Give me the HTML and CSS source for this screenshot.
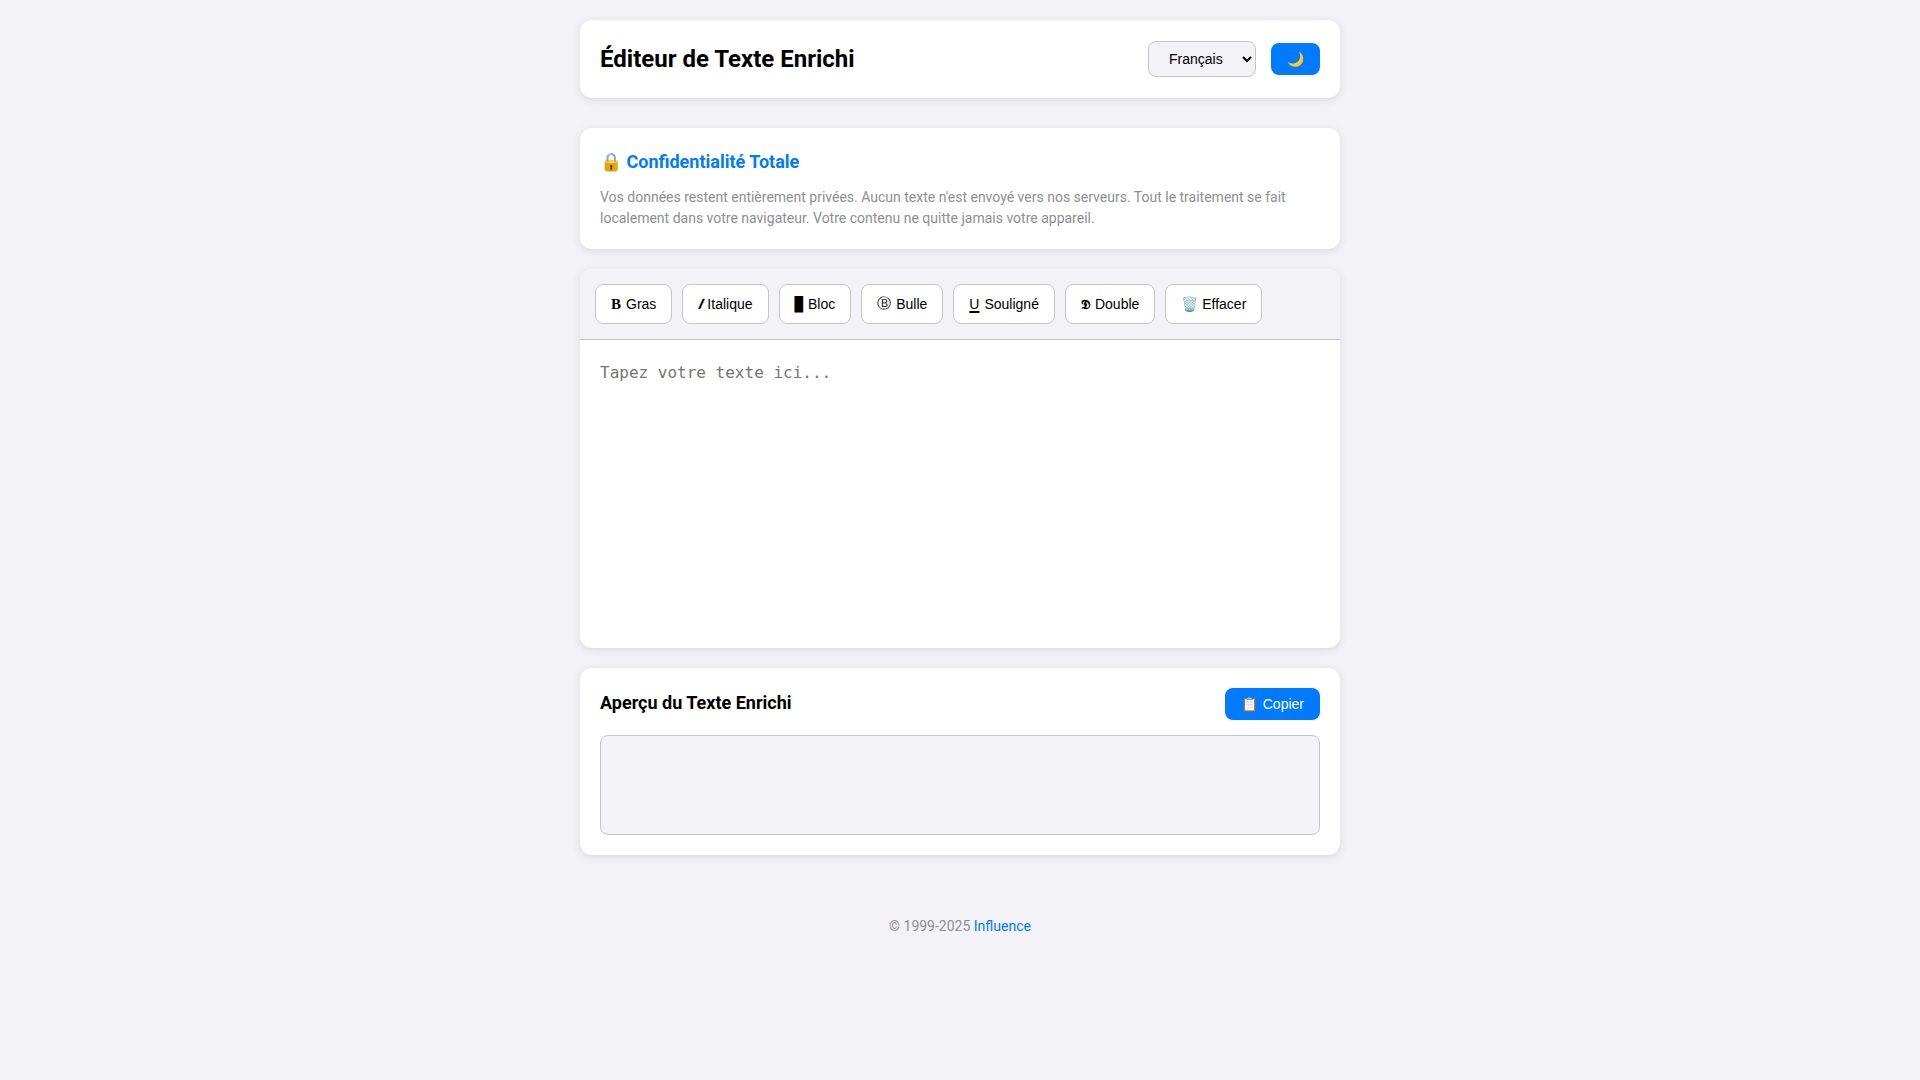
FILE: index.html
```html
<!DOCTYPE html>
<html lang="fr">
<head>
    <meta charset="UTF-8">
    <meta name="viewport" content="width=device-width, initial-scale=1.0">
    <title>Éditeur de Texte Enrichi</title>
    <link rel="stylesheet" href="styles.css">
</head>
<body>
    <div class="container">
        <header class="header card">
            <h1>Éditeur de Texte Enrichi</h1>
            <div class="controls">
                <select class="language-selector" id="language" aria-label="Langue">
                    <option value="fr" selected>Français</option>
                    <option value="en">English</option>
                </select>
                <button type="button" class="btn" id="themeToggle" aria-label="Thème">🌙</button>
            </div>
        </header>

        <section class="privacy card">
            <h2>🔒 Confidentialité Totale</h2>
            <p>Vos données restent entièrement privées. Aucun texte n'est envoyé vers nos serveurs. Tout le traitement se fait localement dans votre navigateur. Votre contenu ne quitte jamais votre appareil.</p>
        </section>

        <section class="editor card">
            <div class="toolbar">
                <button type="button" class="tool-btn"><strong class="serif">B</strong> <span>Gras</span></button>
                <button type="button" class="tool-btn"><em>𝑰</em> <span>Italique</span></button>
                <button type="button" class="tool-btn"><span class="mono">█</span> <span>Bloc</span></button>
                <button type="button" class="tool-btn"><span>Ⓑ</span> <span>Bulle</span></button>
                <button type="button" class="tool-btn"><u>U</u> <span>Souligné</span></button>
                <button type="button" class="tool-btn"><strong>𝕯</strong> <span>Double</span></button>
                <button type="button" class="tool-btn">🗑️ Effacer</button>
            </div>
            <textarea class="text-editor" id="editor" aria-label="Texte" placeholder="Tapez votre texte ici..."></textarea>
        </section>

        <section class="preview card">
            <div class="preview-header">
                <h2>Aperçu du Texte Enrichi</h2>
                <button type="button" class="btn" id="copyButton"><span>📋</span> <span>Copier</span></button>
            </div>
            <div class="preview-content" id="preview"></div>
        </section>

        <footer class="footer">
            © 1999-2025 <a href="#">Influence</a>
        </footer>
    </div>

    <script>
        const editor = document.getElementById("editor");
        const preview = document.getElementById("preview");

        editor.addEventListener("input", function () {
            preview.textContent = editor.value;
        });

        document.getElementById("copyButton").addEventListener("click", function () {
            navigator.clipboard.writeText(preview.textContent);
        });
    </script>
</body>
</html>
```
FILE: styles.css
```css
* {
    margin: 0;
    padding: 0;
    box-sizing: border-box;
}
body {
    font-family: Roboto, sans-serif;
    background-color: #f2f2f7;
    color: #000000;
    line-height: 1.6;
}
.container {
    max-width: 800px;
    margin: 0 auto;
    padding: 20px;
}
.card {
    background-color: #ffffff;
    border-radius: 12px;
    box-shadow: 0 2px 10px rgba(0, 0, 0, 0.1);
    margin-bottom: 20px;
}
.header {
    display: flex;
    justify-content: space-between;
    align-items: center;
    padding: 20px;
    margin-bottom: 30px;
}
h1 {
    font-size: 24px;
    font-weight: 700;
}
h2 {
    font-size: 18px;
    font-weight: 700;
}
.controls {
    display: flex;
    align-items: center;
    gap: 15px;
}
.language-selector {
    padding: 8px 16px;
    border: 1px solid #c6c6c8;
    border-radius: 8px;
    background-color: #f2f2f7;
    color: #000000;
    font-family: "Liberation Sans", sans-serif;
    font-size: 14px;
}
.btn {
    display: inline-flex;
    align-items: center;
    gap: 5px;
    padding: 8px 16px;
    border: none;
    border-radius: 8px;
    background-color: #007aff;
    color: #ffffff;
    font-family: "Liberation Sans", sans-serif;
    font-size: 14px;
    cursor: pointer;
}
.privacy {
    padding: 20px;
}
.privacy h2 {
    color: #007aff;
    margin-bottom: 10px;
}
.privacy p {
    color: #8e8e93;
    font-size: 14px;
    line-height: 1.5;
}
.editor {
    overflow: hidden;
}
.toolbar {
    display: flex;
    flex-wrap: wrap;
    gap: 10px;
    padding: 15px;
    background-color: #f2f2f7;
    border-bottom: 1px solid #c6c6c8;
}
.tool-btn {
    display: inline-flex;
    align-items: center;
    gap: 5px;
    height: 40px;
    padding: 0 15px;
    border: 1px solid #c6c6c8;
    border-radius: 8px;
    background-color: #ffffff;
    color: #000000;
    font-family: "Liberation Sans", sans-serif;
    font-size: 14px;
    cursor: pointer;
}
.tool-btn u {
    text-decoration-thickness: 2px;
    text-underline-offset: 2px;
}
.serif {
    font-family: "Liberation Serif", serif;
    font-size: 15px;
    font-weight: bold;
}
.mono {
    font-family: "DejaVu Sans Mono", monospace;
}
.text-editor {
    width: 100%;
    min-height: 300px;
    padding: 20px;
    border: none;
    outline: none;
    resize: none;
    background-color: #ffffff;
    color: #000000;
    font-family: "DejaVu Sans Mono", monospace;
    font-size: 16px;
    line-height: 1.6;
}
.preview {
    padding: 20px;
}
.preview-header {
    display: flex;
    justify-content: space-between;
    align-items: center;
    margin-bottom: 15px;
}
.preview-content {
    min-height: 100px;
    padding: 15px;
    border: 1px solid #c6c6c8;
    border-radius: 8px;
    background-color: #f2f2f7;
    white-space: pre-wrap;
}
.footer {
    margin-top: 40px;
    padding: 20px;
    text-align: center;
    color: #8e8e93;
    font-size: 14px;
}
.footer a {
    color: #007aff;
    text-decoration: none;
}
```
